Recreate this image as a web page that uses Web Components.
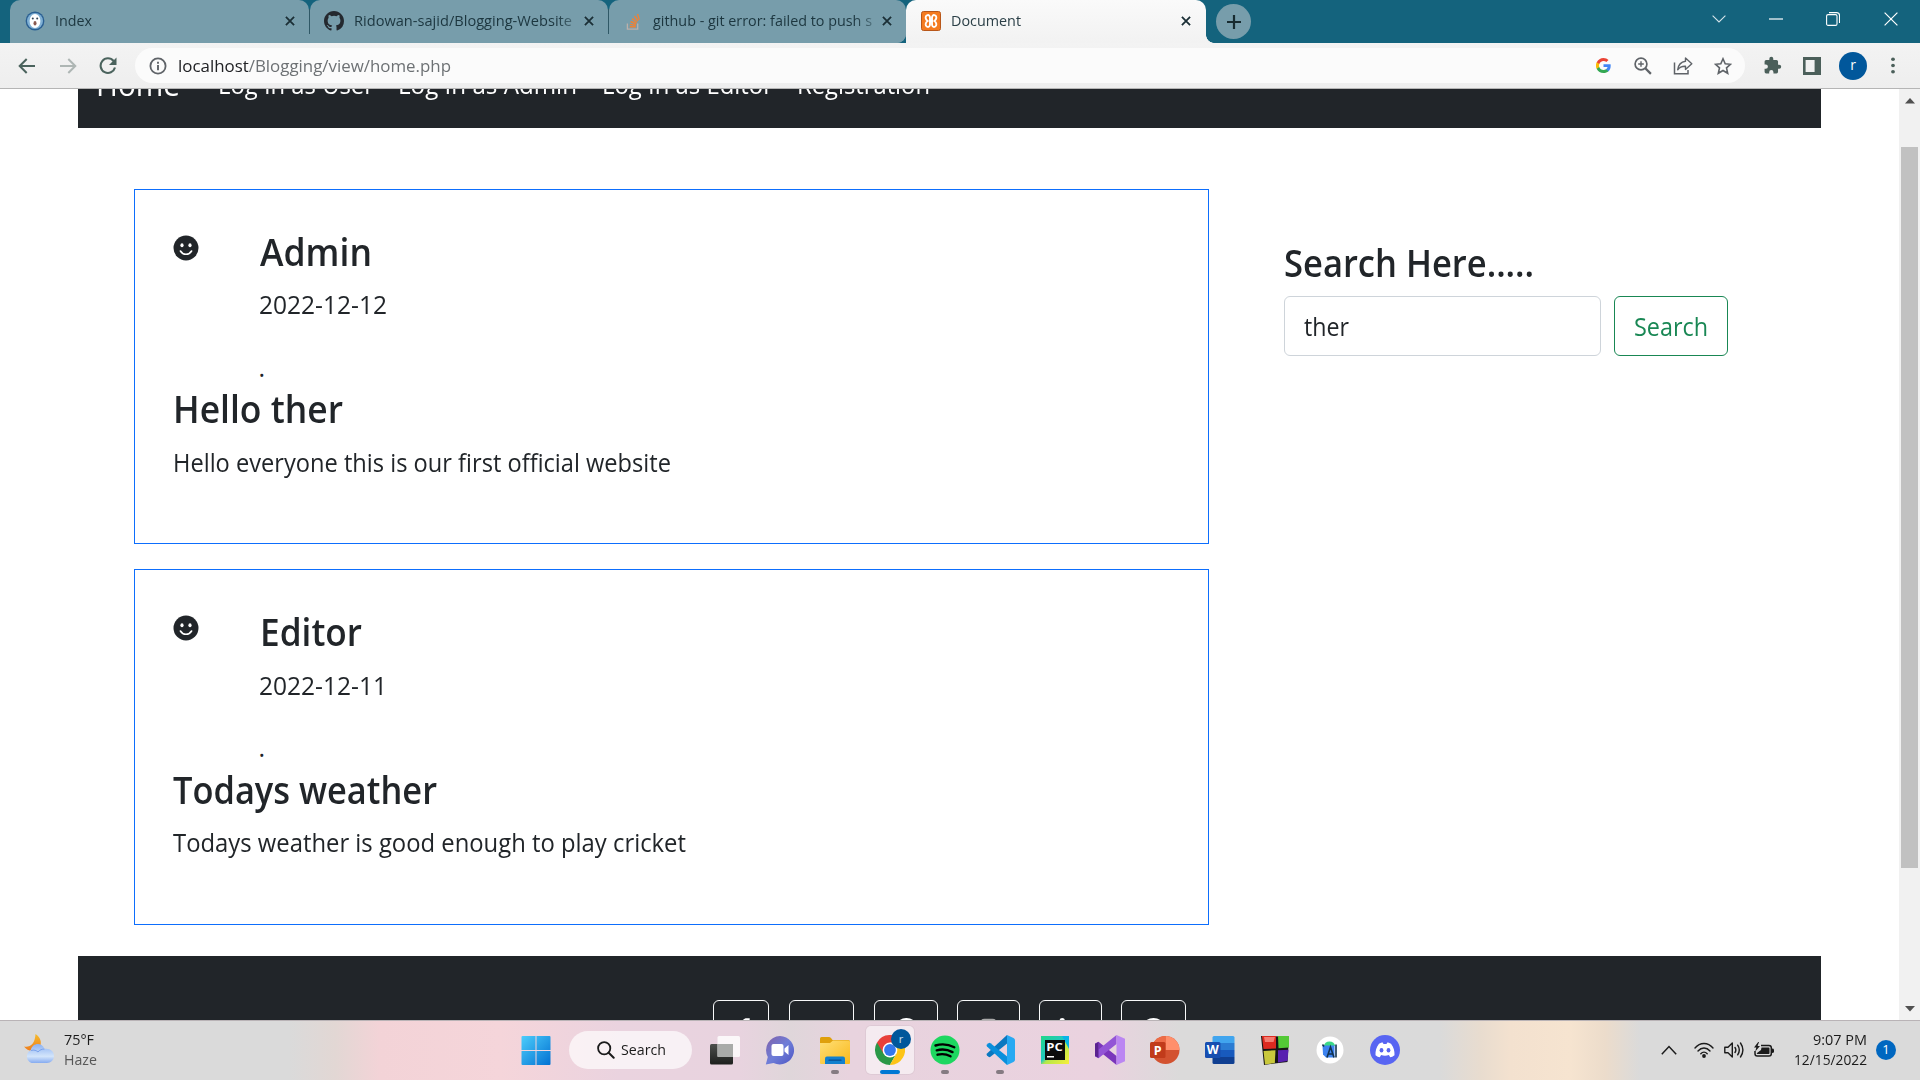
<!DOCTYPE html>
<html lang="en">
<head>
<meta charset="utf-8">
<title>Document</title>
<style>
html,body{margin:0;padding:0;background:#fff;overflow:hidden}
body{width:1920px;height:1080px;font-family:"Open Sans","Noto Sans",sans-serif;color:#212529}
</style>
</head>
<body>
<desktop-screen></desktop-screen>
<script>
const ICONS = {
  index:['0 0 20 20','<ellipse cx="10" cy="10" rx="9.4" ry="9.4" fill="#2a5f92"/><circle cx="10" cy="10" r="8" fill="#7fb0d4"/><ellipse cx="10" cy="10" rx="5.4" ry="7" fill="#fff"/><circle cx="7.8" cy="7.6" r="1" fill="#345"/><circle cx="12.2" cy="7.6" r="1" fill="#345"/><ellipse cx="10" cy="12.2" rx="1.5" ry="2.2" fill="#8a5a50"/>'],
  github:['0 0 16 16','<path fill="#24292f" d="M8 0C3.58 0 0 3.58 0 8c0 3.54 2.29 6.53 5.47 7.59.4.07.55-.17.55-.38v-1.49c-2.01.37-2.53-.49-2.69-.94-.09-.23-.48-.94-.82-1.13-.28-.15-.68-.52-.01-.53.63-.01 1.08.58 1.23.82.72 1.21 1.87.87 2.33.66.07-.52.28-.87.51-1.07-1.78-.2-3.64-.89-3.64-3.95 0-.87.31-1.59.82-2.15-.08-.2-.36-1.02.08-2.12 0 0 .67-.21 2.2.82a7.4 7.4 0 0 1 4 0c1.53-1.04 2.2-.82 2.2-.82.44 1.1.16 1.92.08 2.12.51.56.82 1.27.82 2.15 0 3.07-1.87 3.75-3.65 3.95.29.25.54.73.54 1.48v2.2c0 .21.15.46.55.38A8 8 0 0 0 16 8c0-4.42-3.58-8-8-8z"/>'],
  so:['0 0 16 18','<path fill="none" stroke="#bcb0ab" stroke-width="1.4" d="M1.5 11v6h11v-6"/><path stroke="#ee8236" stroke-width="1.5" fill="none" d="M4 14.5h6.5M4.1 12l6.5.9M4.8 9l6.2 2.4M6.5 6l5.2 4M9 3.2l3.8 5.3M12.4 1l1.7 6.2"/>'],
  xampp:['0 0 20 20','<rect x=".5" y=".5" width="19" height="19" rx="2" fill="#f47b20" stroke="#b8571a"/><path d="M6 4.300c2-.8 3 .8 3 2.500v6.400c0 1.700-1 3.300-3 2.500-2-.9-1.800-4 .6-5.700C4.200 8.300 4 5.200 6 4.300zM14 4.300c-2-.8-3 .8-3 2.500v6.400c0 1.700 1 3.300 3 2.500 2-.9 1.800-4-.6-5.700 2.400-1.700 2.600-4.800.6-5.700z" fill="none" stroke="#fff" stroke-width="1.900"/><path d="M8.500 10h3" stroke="#fff" stroke-width="2.400"/>'],
  x:['0 0 10 10','<path d="M.9.9l8.200 8.200M9.100.9L.9 9.100" stroke="#1b2f36" stroke-width="1.800"/>'],
  plus:['0 0 16 16','<path d="M8 1v14M1 8h14" stroke="#172b30" stroke-width="2.200"/>'],
  wchev:['0 0 14 8','<path d="M.6.6L7 7 13.400.6" fill="none" stroke="#d5e4ea" stroke-width="1.100"/>'],
  wmin:['0 0 14 14','<path d="M0 7h14" stroke="#fff" stroke-width="1.200"/>'],
  wmax:['0 0 14 14','<rect x=".6" y="2.600" width="10.400" height="10.800" rx="1.500" fill="none" stroke="#fff" stroke-width="1.100"/><path d="M3 .6h7.500a3 3 0 0 1 3 3V11" fill="none" stroke="#fff" stroke-width="1.100"/>'],
  wx:['0 0 14 14','<path d="M.6.6l12.800 12.800M13.400.6L.6 13.400" stroke="#fff" stroke-width="1.200"/>'],
  back:['0 0 18 16','<path d="M17 8H2M8.700 1L1.700 8l7 7" fill="none" stroke="#4b635d" stroke-width="2"/>'],
  fwd:['0 0 18 16','<path d="M1 8h15M9.300 1l7 7-7 7" fill="none" stroke="#aeb6b4" stroke-width="2"/>'],
  reload:['0 0 18 18','<path d="M14.600 4A7.300 7.300 0 1 0 16 10.500" fill="none" stroke="#4b635d" stroke-width="2.100"/><path d="M17.500.5v7.500H10z" fill="#4b635d"/>'],
  info:['0 0 18 18','<circle cx="9" cy="9" r="7.600" fill="none" stroke="#5f6368" stroke-width="1.800"/><path d="M9 8v5.200M9 4.700v2" stroke="#5f6368" stroke-width="1.900"/>'],
  google:['0 0 48 48','<path fill="#4285f4" d="M47 24.500c0-1.600-.1-3.100-.4-4.500H24v9h13c-.6 3-2.300 5.500-4.800 7.200v6h7.800C44.500 38 47 31.800 47 24.500z"/><path fill="#34a853" d="M24 48c6.500 0 11.900-2.100 15.900-5.800l-7.800-6c-2.100 1.400-4.900 2.300-8.100 2.300-6.300 0-11.600-4.200-13.500-9.900h-8v6.200C6.500 42.600 14.600 48 24 48z"/><path fill="#fbbc05" d="M10.500 28.500a14.400 14.400 0 0 1 0-9.200v-6.200h-8a24 24 0 0 0 0 21.600z"/><path fill="#ea4335" d="M24 9.500c3.500 0 6.700 1.200 9.200 3.600l6.900-6.900C35.900 2.400 30.500 0 24 0 14.600 0 6.500 5.400 2.500 13.200l8 6.200C12.400 13.700 17.700 9.500 24 9.500z"/>'],
  zoomin:['0 0 18 18','<circle cx="7" cy="7" r="5.900" fill="none" stroke="#5f6368" stroke-width="1.700"/><path d="M11.300 11.300l5.600 5.600" stroke="#5f6368" stroke-width="2.300"/><path d="M7 4.200v5.600M4.200 7h5.600" stroke="#5f6368" stroke-width="1.400"/>'],
  share:['0 0 20 18','<path d="M1.500 5.500v11.300h13.500V13" fill="none" stroke="#5f6368" stroke-width="1.500"/><path d="M12.500 1l6.300 5.700-6.300 5.700V9.200c-3.500-.2-5.800.8-7.800 3.600.6-4.800 3.300-7.900 7.800-8.500z" fill="none" stroke="#5f6368" stroke-width="1.400" stroke-linejoin="round"/>'],
  star:['0 0 18 18','<path d="M9 1.800l2.200 5 5.300.5-4 3.600 1.200 5.400L9 13.500l-4.700 2.800 1.200-5.400-4-3.600 5.300-.5z" fill="none" stroke="#5f6368" stroke-width="1.600"/>'],
  puzzle:['0 0 24 24','<path fill="#4b5f5a" d="M20.500 11H19V7a2 2 0 0 0-2-2h-4V3.500a2.500 2.500 0 0 0-5 0V5H4a2 2 0 0 0-2 2v3.800h1.500a2.700 2.700 0 0 1 0 5.400H2V20a2 2 0 0 0 2 2h3.800v-1.500a2.700 2.700 0 0 1 5.400 0V22H17a2 2 0 0 0 2-2v-4h1.500a2.500 2.500 0 0 0 0-5z"/>'],
  panel:['0 0 18 18','<path fill="#4b5f5a" fill-rule="evenodd" d="M0 0h18v18H0zM2.600 3v12h9V3z"/>'],
  dots:['0 0 4 18','<circle cx="2" cy="2.300" r="1.900" fill="#4b5f5a"/><circle cx="2" cy="9" r="1.900" fill="#4b5f5a"/><circle cx="2" cy="15.700" r="1.900" fill="#4b5f5a"/>'],
  smile:['0 0 26 26','<circle cx="13" cy="13" r="12.500" fill="#212529"/><ellipse cx="9" cy="10.300" rx="1.600" ry="2" fill="#fff"/><ellipse cx="17" cy="10.300" rx="1.600" ry="2" fill="#fff"/><path d="M7.400 16c1.300 2.200 3.300 3.300 5.600 3.300s4.300-1.100 5.600-3.300" fill="none" stroke="#fff" stroke-width="1.600" stroke-linecap="round"/>'],
  up:['0 0 10 6','<path fill="#505050" d="M5 0l5 5.500H0z"/>'],
  down:['0 0 10 6','<path fill="#505050" d="M0 0h10L5 5.500z"/>'],
  fb:['0 0 16 25','<path fill="#fff" d="M14.500.3v4h-2.300c-2 0-2.400 1-2.400 2.300v3h4.300l-.6 4.400H9.800V25H5.300V14.200H1.500V9.800h3.800V6.400C5.300 2.600 7.700.3 11.100.3z"/>'],
  goog:['0 0 25 25','<path d="M12.500 0c3.200 0 6 1.200 8 3.100l-3.300 3.200a6.900 6.900 0 1 0 1.900 8.200H12.500v-4.300h11.300v2.200A11.500 11.500 0 1 1 12.500 0z" fill="#fff"/>'],
  hub:['0 0 16 16','<path fill="#fff" d="M8 0C3.58 0 0 3.58 0 8c0 3.540 2.290 6.530 5.470 7.590.4.070.55-.17.55-.38v-1.490c-2.010.37-2.530-.49-2.690-.94C1.500 11 2.500 11.600 3.500 12.500c.8 1.200 1.800 1 2.300.8l.5-1.100c-1.780-.2-3.640-.89-3.640-3.950 0-.87.31-1.590.82-2.150-.08-.2-.36-1.020.08-2.120 0 0 .67-.21 2.200.82a7.400 7.400 0 0 1 4 0c1.530-1.040 2.200-.82 2.200-.82.44 1.100.16 1.920.08 2.120.51.56.82 1.270.82 2.150 0 3.070-1.870 3.750-3.650 3.950.29.25.54.73.54 1.480v2.200c0 .21.15.46.55.38A8 8 0 0 0 16 8c0-4.420-3.580-8-8-8z"/>'],
  insta:['0 0 25 25','<rect x="5.500" y="1.900" width="14" height="21" rx="3" fill="none" stroke="#aaa" stroke-width="2.200"/><circle cx="12.500" cy="12.500" r="5" fill="none" stroke="#fff" stroke-width="2.200"/>'],
  linkedin:['0 0 25 25','<circle cx="4.200" cy="2.700" r="2.700" fill="#fff"/><path fill="#fff" d="M2 9h4.500v14H2zM9.500 9h4.300v2c3-4 9.200-2.600 9.200 3.500V23h-4.500v-7.500c0-4-4.500-3.500-4.500 0V23H9.500z"/>'],
  weather:['0 0 30 30','<defs><linearGradient id="m" x1="0" y1="0" x2="0" y2="1"><stop stop-color="#f6bd2c"/><stop offset="1" stop-color="#ee7c1e"/></linearGradient><linearGradient id="c" x1="0" y1="0" x2="0" y2="1"><stop stop-color="#8db2f2"/><stop offset=".65" stop-color="#d3e5fb"/><stop offset="1" stop-color="#86abf0"/></linearGradient></defs><path d="M11.500 0c5 3 6.500 8.500 4.500 12.500C13 17.500 4 18.500 0 12.500c6 1.200 11-2.500 11.500-12.500z" fill="url(#m)"/><path d="M7.500 29a7 7 0 0 1-.8-12.800C8.500 8.500 18 8 20.500 15c5-1 9.500 2 9.500 7a7 7 0 0 1-7 7z" fill="url(#c)"/><path d="M7 16.500c3-1 5.500 0 7 1.500 1.500-2 4-3 6.500-3" fill="none" stroke="#6d98e8" stroke-width=".8"/>'],
  win:['0 0 30 30','<defs><linearGradient id="w" x1="0" y1="0" x2="1" y2="1"><stop stop-color="#4ccdfb"/><stop offset="1" stop-color="#0271d2"/></linearGradient></defs><path fill="url(#w)" d="M.5 2q0-1 1-1H14.500v14H.5zM15.500 1H28.500q1 0 1 1v13h-14zM.5 16h14v14h-13q-1 0-1-1zM15.500 16h14v13q0 1-1 1h-13z"/>'],
  search:['0 0 18 18','<circle cx="7.200" cy="7.200" r="6.100" fill="none" stroke="#1b1b1b" stroke-width="1.800"/><path d="M11.700 11.700l5 5" stroke="#1b1b1b" stroke-width="2" stroke-linecap="round"/>'],
  taskview:['0 0 30 30','<defs><linearGradient id="tv" x1="0" y1="0" x2="0" y2="1"><stop stop-color="#4c4f4c"/><stop offset="1" stop-color="#1d1f1d"/></linearGradient></defs><rect x="0" y="9" width="23" height="20.500" rx="1.500" fill="url(#tv)"/><rect x="7.500" y="1" width="22.500" height="21" rx="1.500" fill="#fff" opacity=".82"/><rect x="7.500" y="9" width="15.500" height="13" fill="#a9aba9"/>'],
  teams:['0 0 30 30','<defs><linearGradient id="t" x1="0" y1="0" x2="1" y2="1"><stop stop-color="#8160a8"/><stop offset=".5" stop-color="#6f7ed8"/><stop offset="1" stop-color="#4d55c4"/></linearGradient></defs><path d="M15 1a14.200 14.200 0 1 1-6.500 26.900L.8 29.500l2-7.500A14.200 14.200 0 0 1 15 1z" fill="url(#t)"/><rect x="6.500" y="9" width="12" height="12" rx="2" fill="#fff"/><path d="M19.500 13.500l4-3.500v10l-4-3.500z" fill="#fff"/>'],
  folder:['0 0 30 30','<defs><linearGradient id="f" x1="0" y1="0" x2="1" y2="1"><stop stop-color="#ffdf76"/><stop offset="1" stop-color="#f9b91c"/></linearGradient></defs><path d="M0 3.500Q0 2 1.500 2H9q1 0 2 1l1.500 2H28.500Q30 5 30 6.500V12H0z" fill="#dfa00c"/><path d="M0 8h10l3-2.500h15.500q1.500 0 1.500 1.500v21q0 1-1 1H1q-1 0-1-1z" fill="url(#f)"/><path d="M5 29v-5.500q0-2 2-2h16q2 0 2 2V29z" fill="#1280ce"/><path d="M9 25.200h12" stroke="#0a4c8f" stroke-width="1.200" stroke-linecap="round"/>'],
  chrome:['0 0 30 30','<path d="M2 7.500A15 15 0 0 0 14.900 30l6.500-11.500L15 15z" fill="#2a9847"/><path d="M28 7.500A15 15 0 0 1 14.900 30l6.500-11.300L15 7.500z" fill="#fdc416"/><path d="M2 7.500A15 15 0 0 1 28 7.500H15L8.600 18.700z" fill="#e8403a"/><circle cx="15" cy="15" r="7.400" fill="#fff"/><circle cx="15" cy="15" r="5.900" fill="#3478ee"/>'],
  spotify:['0 0 30 30','<circle cx="15" cy="15" r="14.500" fill="#1ed760"/><path d="M5.500 10.500c6-1.800 13-1.200 18.800 1.800M6.700 15.300c5.300-1.400 11-.8 15.800 1.800M7.500 19.700c4.500-1.100 9-.6 13 1.600" fill="none" stroke="#000" stroke-width="2.400" stroke-linecap="round"/>'],
  vscode:['0 0 30 30','<path d="M22 0L2 18.500q-1 1 0 2l1.500 1.300q1 .7 2 0L24 7z" fill="#0a78c0"/><path d="M22 30L2 11.500q-1-1 0-2l1.500-1.300q1-.7 2 0L24 23z" fill="#0a8fdc"/><path d="M22 0l6.500 3q1.500.8 1.500 2.300v19.400q0 1.500-1.500 2.300L22 30z" fill="#27a9f2"/>'],
  pycharm:['0 0 30 30','<defs><linearGradient id="p" x1="0" y1="0" x2="1" y2="1"><stop stop-color="#21d789"/><stop offset=".45" stop-color="#21c8c0"/><stop offset=".55" stop-color="#b5e84a"/><stop offset="1" stop-color="#f8ee3a"/></linearGradient></defs><rect x="1" y="1" width="28" height="28" fill="url(#p)"/><path d="M22 1h7v13z" fill="#07b5e8"/><rect x="5" y="5" width="20" height="20" fill="#0c0c0c"/><text x="6.300" y="16" font-size="11" font-weight="700" textLength="16.500" lengthAdjust="spacingAndGlyphs" fill="#fff">PC</text><rect x="7" y="21" width="7" height="1.500" fill="#fff"/>'],
  vs:['0 0 30 30','<path d="M0 8.500l3.500-1.700 18 14.200V30L3.500 15.500v7L0 21z" fill="#7a35bb"/><path d="M0 21.500l3.500 1.700L21.500 9V0L3.500 14.500v-7L0 9z" fill="#9354d6"/><path d="M0 9l3.500-2v16L0 21z" fill="#5b2390"/><path d="M21.500 0L30 3.800v22.400L21.500 30z" fill="#bb86f2"/>'],
  ppt:['0 0 30 30','<circle cx="15.500" cy="15" r="14" fill="#d35230"/><path d="M15.500 1A14 14 0 0 1 29.500 15h-14z" fill="#ff8f6b"/><path d="M15.500 1A14 14 0 0 0 1.500 15h14z" fill="#ed6c47"/><rect x="0" y="7" width="15.500" height="16" rx="1.500" fill="#c13b1b"/><text x="3.800" y="19.500" font-size="12.500" font-weight="700" fill="#fff">P</text>'],
  word:['0 0 30 30','<path d="M7.500 2.500q0-1.500 1.500-1.500h19q1.500 0 1.500 1.500V8h-22z" fill="#41a5ee"/><path d="M7.500 8h22v7h-22z" fill="#2b7cd3"/><path d="M7.500 15h22v7h-22z" fill="#185abd"/><path d="M7.500 22h22v5.500q0 1.500-1.500 1.500H9q-1.500 0-1.500-1.500z" fill="#103f91"/><rect x="0" y="7" width="15.500" height="16" rx="1.500" fill="#174eb0"/><text x="1.800" y="19.300" font-size="12" font-weight="700" textLength="12" lengthAdjust="spacingAndGlyphs" fill="#fff">W</text>'],
  blocks:['0 0 30 30','<path d="M1 1l28 .5-1.500 25.500-13 1.500L4 30z" fill="#151515"/><path d="M2 1h14v12.500L3.500 14z" fill="#dc2a20"/><path d="M4 2h11l-1.500 5H5z" fill="#f47d71"/><path d="M18 1h11v11.500l-10.500.8z" fill="#53c936"/><path d="M3.500 16l12-.7-.7 12.700-9.800 1.500z" fill="#c9c83c"/><path d="M18 15.300l10.500-.6-1 11.300-9.500 1.500z" fill="#5820b0"/>'],
  studio:['0 0 30 30','<circle cx="15" cy="15" r="13.500" fill="#fff"/><path d="M9 11a5.500 4.500 0 0 1 11 0z" fill="#3bd787"/><path d="M7.500 10.500H19.500V22.500H11l-3-3z" fill="#3d83f0"/><path d="M12 22.500l3.500-10.500 3.500 10.500M13.500 19h4" fill="none" stroke="#12324f" stroke-width="1.600"/><path d="M21 9.500v13M7.500 9.500l1.500 2" stroke="#12324f" stroke-width="1.600"/>'],
  discord:['0 0 30 30','<circle cx="15" cy="15" r="15" fill="#5865f2"/><path d="M9 8.700c1.500-.8 2.900-1.100 3.700-1.200l.8 1.400h3l.8-1.400c.8.100 2.200.4 3.700 1.200 2.800 3.600 3.700 7.500 3.500 11.500-1.500 1.200-3 1.800-4.300 2.100l-1.300-2.200c-2.600.9-5.200.9-7.800 0l-1.300 2.200c-1.300-.3-2.800-.9-4.300-2.100C5.300 16.200 6.200 12.300 9 8.700z" fill="#fff"/><ellipse cx="11.500" cy="15.300" rx="1.900" ry="2.200" fill="#5865f2"/><ellipse cx="18.500" cy="15.300" rx="1.900" ry="2.200" fill="#5865f2"/>'],
  tchev:['0 0 16 10','<path d="M.8 9.200L8 1.500l7.200 7.700" fill="none" stroke="#1b1b1b" stroke-width="1.500"/>'],
  wifi:['0 0 20 16','<g fill="none" stroke="#1b1b1b" stroke-width="1.400" stroke-linecap="round"><path d="M1 6c5-6 13-6 18 0M4 9c3.500-4 8.500-4 12 0M6.800 11.800c2-2.200 4.400-2.200 6.400 0"/></g><circle cx="10" cy="14" r="1.900" fill="#1b1b1b"/>'],
  sound:['0 0 20 18','<g fill="none" stroke="#1b1b1b" stroke-width="1.400" stroke-linejoin="round" stroke-linecap="round"><path d="M.8 6.200h3.200L8.300 2v14L4 11.800H.8zM11 6.500q1.700 2.500 0 5M13.700 4.200q3.200 4.800 0 9.600M16.500 2q4.800 7 0 14"/></g>'],
  battery:['0 0 20 16','<path d="M7 3.500h8q2.300 0 2.300 2.300v5.900q0 2.300-2.300 2.300H3.300Q1 14 1 11.700V9" fill="none" stroke="#1b1b1b" stroke-width="1.500"/><path d="M7.500 5.500h7.200q.8 0 .8.800v5q0 .8-.8.800H3.500q-.8 0-.8-.8L7 8z" fill="#1b1b1b"/><path d="M18 6.500q2 0 2 1.200v2q0 1.200-2 1.200z" fill="#1b1b1b"/><path d="M4.200 0L0 5.500h2.300L1.300 9.500 6 4H3.600L5 0z" fill="#1b1b1b"/>']
};
const define = (name, html, init) => {
  const t = document.createElement('template');
  t.innerHTML = html;
  customElements.define(name, class extends HTMLElement {
    connectedCallback() {
      if (this.shadowRoot) return;
      this.attachShadow({mode:'open'}).append(t.content.cloneNode(true));
      if (init) init(this, this.shadowRoot);
    }
  });
};

/* ui-icon: inline SVG glyph, sized by w and h */
define('ui-icon', `<style>:host{display:block;flex:none}svg{display:block;width:100%;height:100%;font-family:"Open Sans",sans-serif}</style>`, (el, r) => {
  const [box, body] = ICONS[el.getAttribute('name')];
  el.style.width = el.getAttribute('w') + 'px';
  el.style.height = (el.getAttribute('h') || el.getAttribute('w')) + 'px';
  r.innerHTML += `<svg viewBox="${box}" preserveAspectRatio="none">${body}</svg>`;
});

/* ui-text: one line of text condensed to the width w */
define('ui-text', `<style>:host{display:block;flex:none;white-space:pre}span{display:inline-block;transform-origin:0 50%;vertical-align:top}</style><span><slot></slot></span>`, (el, r) => {
  const w = +el.getAttribute('w'), s = r.querySelector('span');
  el.style.width = w + 'px';
  s.style.transform = `scaleX(${w / s.getBoundingClientRect().width})`;
});

define('browser-tab', `<style>
:host{display:flex;align-items:center;box-sizing:border-box;height:43px;background:#779dab;border-radius:10px 10px 0 0;font-size:14.6px;line-height:22px;color:#1c363f;overflow:hidden}
:host([active]){background:linear-gradient(#fafafa,#f2f2f2);color:#2c4048}
.cap{flex:1;overflow:hidden;margin-top:-2px}
:host([fade]) .cap{-webkit-mask:linear-gradient(90deg,#000 calc(100% - 28px),rgba(0,0,0,.15))}
</style><slot name="icon"></slot><div class="cap"><slot></slot></div><ui-icon name="x" w="10"></ui-icon>`);

define('tab-strip', `<style>
:host{display:flex;height:43px;background:#14637d;padding-left:10px;box-sizing:border-box}
i{width:1px;height:25px;margin:9px 0 0;background:#2f5866;flex:none}
.back{background:linear-gradient(#14637d 12px,#779dab 12px);display:flex;width:896px;border-radius:0 0 9px 0;overflow:hidden}
browser-tab{flex:none}
.new{width:35px;height:35px;border-radius:50%;background:#779dab;margin:4px 0 0 10px;display:flex;align-items:center;justify-content:center}
.win{margin-left:auto;display:flex;align-items:center;height:37px;padding-right:22px}
.foot{align-self:flex-end;width:8px;height:8px;background:radial-gradient(circle at 100% 0,#14637d 7.500px,#f2f2f2 8px);margin-right:-8px;flex:none}
</style>
<div class="back">
<browser-tab style="width:299px;padding:0 14px 1px 15px"><ui-icon slot="icon" name="index" w="20" style="margin-right:10px"></ui-icon><ui-text w="37">Index</ui-text></browser-tab><i></i>
<browser-tab fade style="width:298px;padding:0 14px 1px 14px"><ui-icon slot="icon" name="github" w="20" style="margin-right:10px"></ui-icon><ui-text w="218">Ridowan-sajid/Blogging-Website</ui-text></browser-tab><i></i>
<browser-tab fade style="width:297px;padding:0 14px 1px 17px"><ui-icon slot="icon" name="so" w="15" h="17" style="margin-right:12px"></ui-icon><ui-text w="219">github - git error: failed to push s</ui-text></browser-tab></div>
<browser-tab active style="width:300px;padding:0 15px 1px 15px"><ui-icon slot="icon" name="xampp" w="20" style="margin-right:10px"></ui-icon><ui-text w="70">Document</ui-text></browser-tab>
<div class="foot"></div>
<div class="new"><ui-icon name="plus" w="16"></ui-icon></div>
<div class="win"><ui-icon name="wchev" w="14" h="8"></ui-icon><ui-icon name="wmin" w="14" style="margin-left:43px"></ui-icon><ui-icon name="wmax" w="14" style="margin-left:43px"></ui-icon><ui-icon name="wx" w="14" style="margin-left:44px"></ui-icon></div>`);

define('tool-bar', `<style>
:host{display:flex;align-items:center;height:46px;box-sizing:border-box;background:linear-gradient(#f3f3f3,#eee);border-bottom:1px solid #b5b5b5;padding:0 25px 0 18px}
.box{display:flex;align-items:center;width:1610px;height:35px;border-radius:18px;background:#fbfbfb;margin-left:18px;box-sizing:border-box;padding:0 13px 0 14px;font-size:17px;line-height:24px;color:#6d7174;flex:none}
.url{margin-left:11px}
.h{color:#202124}
.r{display:flex;align-items:center;margin-left:auto}
.av{width:28px;height:28px;border-radius:50%;background:#01579b;color:#fff;font-size:14px;line-height:26px;text-align:center}
</style>
<ui-icon name="back" w="18" h="16"></ui-icon><ui-icon name="fwd" w="18" h="16" style="margin-left:23px"></ui-icon><ui-icon name="reload" w="18" style="margin-left:22px"></ui-icon>
<div class="box"><ui-icon name="info" w="18"></ui-icon><ui-text class="url" w="273"><span class="h">localhost</span>/Blogging/view/home.php</ui-text>
<div class="r"><ui-icon name="google" w="15"></ui-icon><ui-icon name="zoomin" w="18" style="margin-left:23px"></ui-icon><ui-icon name="share" w="20" h="18" style="margin-left:21px"></ui-icon><ui-icon name="star" w="18" style="margin-left:21px"></ui-icon></div></div>
<div class="r"><ui-icon name="puzzle" w="19"></ui-icon><ui-icon name="panel" w="18" style="margin:0 18px 0 21px"></ui-icon><div class="av">r</div><ui-icon name="dots" w="4" h="17" style="margin-left:24px"></ui-icon></div>`);

define('nav-bar', `<style>
:host{display:block;height:39px;overflow:hidden;background:#212529;color:#fff}
.row{display:flex;align-items:flex-start;margin-top:-24px;padding-left:18px;font-size:25px;line-height:38px;height:62px}
.brand{font-size:31.25px;margin-right:38px}
</style><div class="row"><ui-text class="brand" w="84">Home</ui-text><ui-text w="156" style="margin-right:24px">Log In as User</ui-text><ui-text w="179" style="margin-right:25px">Log In as Admin</ui-text><ui-text w="171" style="margin-right:24px">Log In as Editor</ui-text><ui-text w="133">Registration</ui-text></div>`);

define('post-card', `<style>
:host{display:block;box-sizing:border-box;border:1px solid #0d6efd;padding:39px 38px 0;font-size:25px;line-height:38px}
.top{display:flex}
.top ui-icon{margin:6px 61px 0 -.5px}
.name,.title{font-size:37.5px;font-weight:600;line-height:45px}
.date{margin:var(--a,11px) 0 0 -1px} .dot{margin:var(--b,25px) 0 -1px -1px} .title{margin-top:var(--c,1px)} .text{margin-top:var(--d,12px)}
</style><div class="top"><ui-icon name="smile" w="26"></ui-icon><div><div class="name"><slot name="name"></slot></div><div class="date"><slot name="date"></slot></div><div class="dot">.</div></div></div>
<div class="title"><slot name="title"></slot></div><div class="text"><slot></slot></div>`);

define('search-form', `<style>
:host{display:block;width:450px}
h4{margin:0;font-size:37.5px;font-weight:600;line-height:45px}
form{display:flex;gap:13px;margin-top:11px}
.in,.btn{box-sizing:border-box;height:60px;border-radius:6px;font-size:25px;line-height:59px;padding-left:19px}
.in{width:317px;border:1px solid #ced4da}
.btn{width:114px;border:1px solid #198754;color:#198754}
</style><h4><ui-text w="250">Search Here.....</ui-text></h4><form><div class="in"><ui-text w="45">ther</ui-text></div><div class="btn"><ui-text w="74">Search</ui-text></div></form>`);

define('page-footer', `<style>
:host{display:flex;height:64px;overflow:hidden;background:#212529;box-sizing:border-box;padding:44px 0 0 635px}
div{box-sizing:border-box;height:63px;border:1px solid #f8f9fa;border-radius:6px;display:flex;justify-content:center;padding-top:17px;flex:none}
</style><div style="width:56px;margin-right:20px"><ui-icon name="fb" w="14" h="25" style="margin-left:6px"></ui-icon></div><div style="width:65px;margin-right:20px"></div><div style="width:64px;margin-right:19px"><ui-icon name="goog" w="25"></ui-icon></div><div style="width:63px;margin-right:19px"><ui-icon name="insta" w="25"></ui-icon></div><div style="width:63px;margin-right:19px"><ui-icon name="linkedin" w="25" style="margin-left:-1px"></ui-icon></div><div style="width:65px"><ui-icon name="hub" w="25"></ui-icon></div>`);

define('scroll-bar', `<style>
:host{display:flex;flex-direction:column;align-items:center;width:21px;box-sizing:border-box;background:#f1f1f1;flex:none;padding:9px 0 8px}
.thumb{width:17px;height:721px;background:#c1c1c1;margin-top:43px}
.d{margin-top:auto}
</style><ui-icon name="up" w="10" h="6"></ui-icon><div class="thumb"></div><ui-icon class="d" name="down" w="10" h="6"></ui-icon>`);

define('page-view', `<style>
:host{display:flex;height:931px;overflow:hidden;background:#fff}
main{width:1743px;margin:0 78px;flex:none}
.body{display:flex;height:828px;box-sizing:border-box;padding:61px 0 0 56px}
.posts{width:1075px;display:flex;flex-direction:column;gap:25px}
search-form{margin:51px 0 0 75px}
</style>
<main><nav-bar></nav-bar><div class="body"><div class="posts">
<post-card style="height:355px"><ui-text slot="name" w="112">Admin</ui-text><ui-text slot="date" w="128">2022-12-12</ui-text><ui-text slot="title" w="170">Hello ther</ui-text><ui-text w="498">Hello everyone this is our first official website</ui-text></post-card>
<post-card style="height:356px;--a:12px;--b:24px;--c:2px;--d:11px"><ui-text slot="name" w="102">Editor</ui-text><ui-text slot="date" w="128">2022-12-11</ui-text><ui-text slot="title" w="264">Todays weather</ui-text><ui-text w="513">Todays weather is good enough to play cricket</ui-text></post-card>
</div><search-form></search-form></div><page-footer></page-footer></main><scroll-bar></scroll-bar>`);

define('task-app', `<style>
:host{display:flex;flex-direction:column;align-items:center;width:48px;height:48px;box-sizing:border-box;padding-top:9px;border-radius:5px;position:relative;flex:none}
:host([active]){background:rgba(255,255,255,.55);box-shadow:0 0 0 1px rgba(0,0,0,.04)}
b{width:8px;height:4px;border-radius:2px;background:#857b82;margin-top:5px;display:none}
:host([run]) b{display:block}
:host([active]) b{display:block;width:20px;background:#0078d4}
.badge{position:absolute;right:3px;top:3px;width:20px;height:20px;border-radius:50%;background:#01579b;color:#cfe0f0;font-size:11px;line-height:19px;text-align:center;display:none}
:host([active]) .badge{display:block}
</style><slot></slot><b></b>`, (el, r) => {
  const n = document.createElement('ui-icon');
  n.setAttribute('name', el.getAttribute('icon')); n.setAttribute('w', 30);
  r.insertBefore(n, r.querySelector('b'));
  if (el.hasAttribute('active')) { const d = document.createElement('div'); d.className = 'badge'; d.textContent = 'r'; r.append(d); }
});

define('task-bar', `<style>
:host{display:flex;height:60px;box-sizing:border-box;border-top:1px solid #b9b3b6;font-size:14.5px;line-height:20px;color:#1b1b1b;
background:linear-gradient(90deg,#dadada 0,#dadada 290px,#e2d7d4 335px,#f3d3d7 380px,#f5d5da 500px,#ead3df 620px,#e8d3df 740px,#dfd6da 790px,#e8d3de 850px,#ead2df 1100px,#dbdada 1180px,#dadada 1440px,#e8dccf 1480px,#f3e1cf 1510px,#f6e4d0 1570px,#ecdccb 1605px,#dadada 1640px)}
.wx{display:flex;width:497px;box-sizing:border-box;padding:9px 0 0 24px;flex:none}
.wx ui-icon{margin:4px 10px 0 0}
.haze{color:#575757}
.apps{display:flex;padding-top:5px;width:1150px}
.pill{display:flex;align-items:center;box-sizing:border-box;width:123px;height:38px;border-radius:19px;background:rgba(255,255,255,.68);margin:5px 9px 0 9px;padding-left:28px;flex:none;gap:6px}
task-app+task-app{margin-left:7px}
.tray{display:flex;align-items:center;margin-left:14px;height:58px}
.clock{width:73px;margin-left:20px;display:flex;flex-direction:column;align-items:flex-end}
.n{width:20px;height:20px;border-radius:50%;background:#0067c0;color:#fff;font-size:13px;line-height:19px;text-align:center;margin-left:9px}
</style>
<div class="wx"><ui-icon name="weather" w="30"></ui-icon><div><ui-text w="30">75°F</ui-text><ui-text class="haze" w="33">Haze</ui-text></div></div>
<div class="apps"><task-app icon="win" style="margin-left:15px"></task-app><div class="pill"><ui-icon name="search" w="18"></ui-icon><ui-text w="45">Search</ui-text></div>
<task-app icon="taskview"></task-app><task-app icon="teams"></task-app><task-app icon="folder" run></task-app><task-app icon="chrome" active></task-app><task-app icon="spotify" run></task-app><task-app icon="vscode" run></task-app><task-app icon="pycharm"></task-app><task-app icon="vs"></task-app><task-app icon="ppt"></task-app><task-app icon="word"></task-app><task-app icon="blocks"></task-app><task-app icon="studio"></task-app><task-app icon="discord"></task-app></div>
<div class="tray"><ui-icon name="tchev" w="16" h="10"></ui-icon><ui-icon name="wifi" w="20" h="16" style="margin-left:17px"></ui-icon><ui-icon name="sound" w="20" h="18" style="margin-left:10px"></ui-icon><ui-icon name="battery" w="20" h="16" style="margin-left:10px"></ui-icon>
<div class="clock"><ui-text w="54">9:07 PM</ui-text><ui-text w="73">12/15/2022</ui-text></div><div class="n">1</div></div>`);

define('desktop-screen', `<style>:host{display:flex;flex-direction:column;width:1920px;height:1080px;overflow:hidden}</style>
<tab-strip></tab-strip><tool-bar></tool-bar><page-view></page-view><task-bar></task-bar>`);
</script>
</body>
</html>
